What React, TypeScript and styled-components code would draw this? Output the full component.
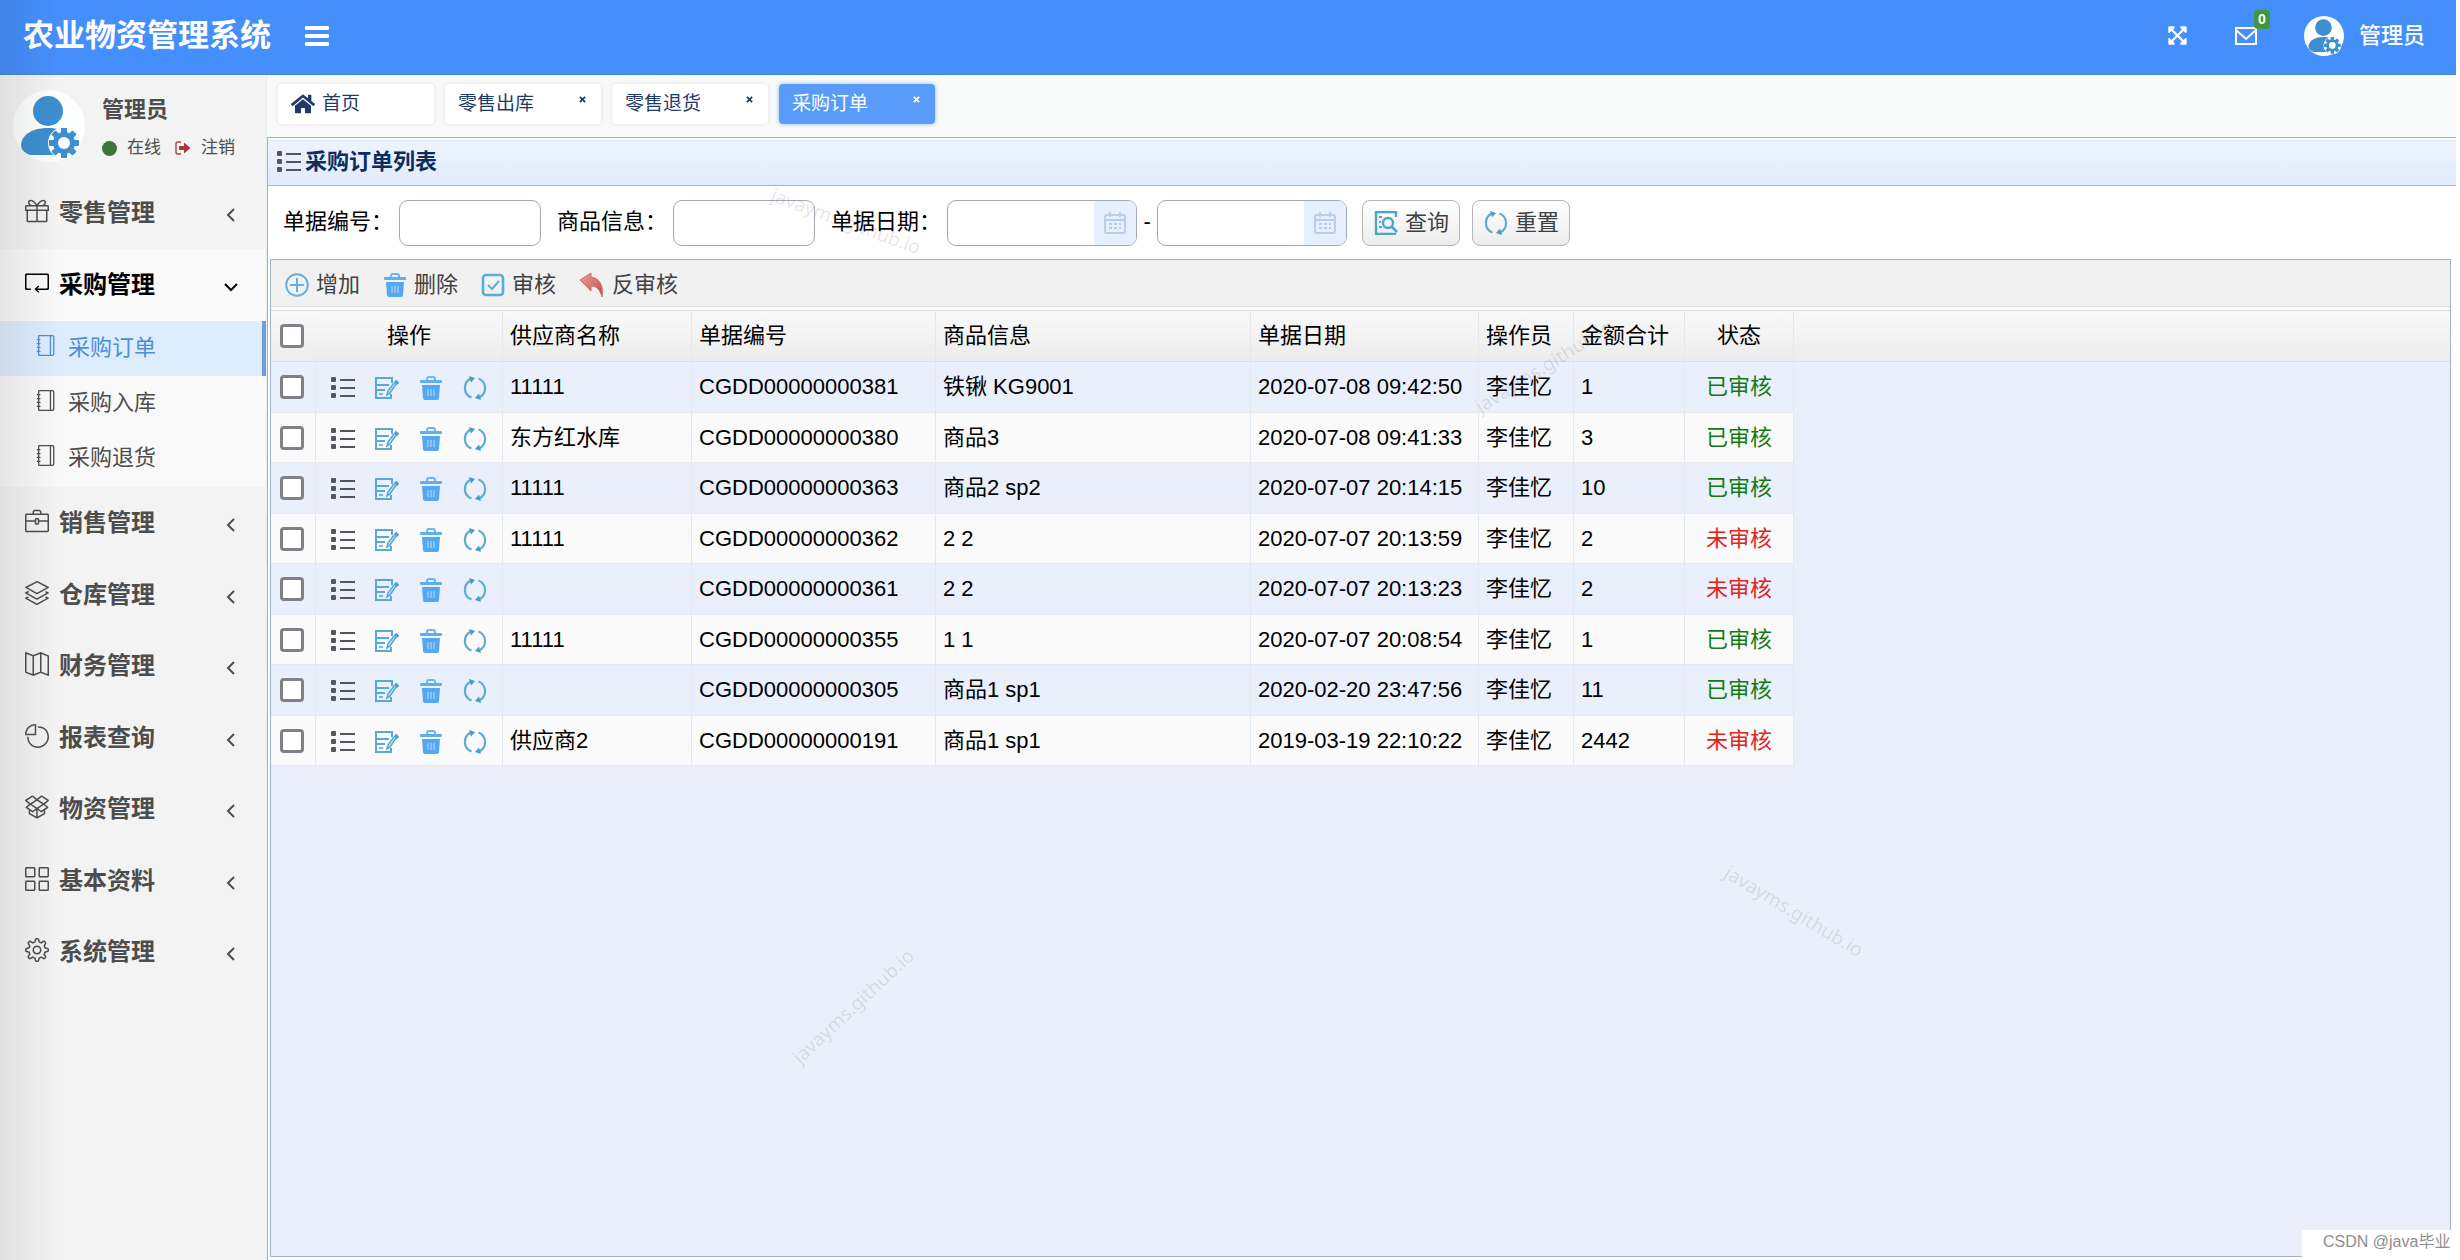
import React, { useState } from "react";
import styled, { createGlobalStyle, css } from "styled-components";
import {
  SlPresent,
  SlLoop,
  SlBriefcase,
  SlLayers,
  SlMap,
  SlPieChart,
  SlSocialDropbox,
  SlGrid,
  SlSettings,
  SlNotebook,
} from "react-icons/sl";
import { FaHome, FaExpandArrowsAlt } from "react-icons/fa";

const Global = createGlobalStyle`
  *, *::before, *::after { box-sizing: border-box; }
  body {
    margin: 0;
    background: #fefefe;
    color: #000;
    font-family: "Liberation Sans", "Noto Sans CJK SC", sans-serif;
    font-size: 22px;
    line-height: 30px;
  }
  button, input { font: inherit; color: inherit; margin: 0; }
  button { border: 0; padding: 0; background: none; cursor: pointer; }
  a { color: inherit; text-decoration: none; }
  svg { display: block; flex: none; }
`;

/* ---------- icons ---------- */

const ListIcon = () => (
  <svg width="24" height="24" viewBox="0 0 24 24" fill="#55555f">
    <rect x="0" y="1" width="5" height="5" rx="1" />
    <rect x="0" y="9" width="5" height="5" rx="1" />
    <rect x="0" y="17" width="5" height="5" rx="1" />
    <rect x="9" y="3" width="15" height="2" />
    <rect x="9" y="11" width="15" height="2" />
    <rect x="9" y="19" width="15" height="2" />
  </svg>
);

const EditIcon = () => (
  <svg width="24" height="24" viewBox="0 0 24 24" fill="none" stroke="#58aad6" strokeWidth="2">
    <path d="M17 7V2H1v20h15v-4" />
    <path d="M1 9h13M1 14h9" />
    <path d="M4 18h4" strokeWidth="1.600" />
    <path d="M21 8l-6 9-3 2 1-4 6-8" fill="#d5ebf8" strokeWidth="1.600" />
    <path d="M20 5l3 3" strokeWidth="3.400" stroke="#4a9fd0" />
  </svg>
);

const TrashIcon = () => (
  <svg width="24" height="24" viewBox="0 0 24 24">
    <path d="M8 4V3a2 2 0 0 1 2-2h4a2 2 0 0 1 2 2v1" fill="none" stroke="#69b7f0" strokeWidth="2" />
    <rect x="1" y="4" width="22" height="3" rx="1" fill="#5cb0ee" />
    <path d="M3 9h18l-1 13a2 2 0 0 1-2 2H6a2 2 0 0 1-2-2z" fill="#54a8f2" />
    <path d="M9 13v7M12 13v7M15 13v7" stroke="#9bcffb" strokeWidth="1.400" />
  </svg>
);

const RefreshIcon = () => (
  <svg width="24" height="24" viewBox="0 0 24 24" fill="none" stroke="#5eaccf" strokeWidth="2.200">
    <path d="M8.500 21.500A10.300 10.300 0 0 1 8 2.500" />
    <path d="M15.500 2.500A10.300 10.300 0 0 1 16 21.500" />
    <path d="M6 0l6 2-4 4.500z" fill="#4a9ac6" stroke="none" />
    <path d="M18 24l-6-2 4-4.500z" fill="#4a9ac6" stroke="none" />
  </svg>
);

const AddIcon = () => (
  <svg width="24" height="24" viewBox="0 0 24 24" fill="none" stroke="#64b1da" strokeWidth="2">
    <circle cx="12" cy="12" r="10.800" />
    <path d="M12 5v14M5 12h14" />
  </svg>
);

const AuditIcon = () => (
  <svg width="24" height="24" viewBox="0 0 24 24" fill="none" stroke="#55aede" strokeWidth="2.600">
    <rect x="2" y="2" width="20" height="20" rx="3" />
    <path d="M7 12l4 4 7-8" strokeWidth="2" />
  </svg>
);

const UndoIcon = () => (
  <svg width="26" height="26" viewBox="0 0 26 26">
    <defs>
      <linearGradient id="undo" x1="0" y1="0" x2="1" y2="1">
        <stop offset="0" stopColor="#efa39c" />
        <stop offset="1" stopColor="#c3474a" />
      </linearGradient>
    </defs>
    <path d="M1 8L12 1v4c8 1 13 8 11 20-2-7-5-11-11-11v5z" fill="url(#undo)" stroke="#c9706b" strokeWidth="1" />
  </svg>
);

const SearchDocIcon = () => (
  <svg width="24" height="24" viewBox="0 0 24 24" fill="none" stroke="#4fa3cf" strokeWidth="2.400">
    <path d="M22 6V1H2v22h20" />
    <circle cx="14" cy="12" r="5" />
    <path d="M18 16l5 5" strokeWidth="2.600" />
    <path d="M5 6h3M5 11h2M5 16h3" strokeWidth="2" />
  </svg>
);

const CalendarIcon = () => (
  <svg width="24" height="24" viewBox="0 0 24 24" fill="none" stroke="#b9cee4" strokeWidth="2">
    <rect x="2" y="4" width="20" height="18" rx="2" />
    <path d="M2 9h20M7 1v5M17 1v5" />
    <path d="M6 13h12M6 17h12" strokeDasharray="3 2" />
  </svg>
);

const CloseIcon = () => (
  <svg width="7" height="7" viewBox="0 0 8 8" stroke="currentColor" strokeWidth="2">
    <path d="M1 1l6 6M7 1L1 7" />
  </svg>
);

const BarsIcon = () => (
  <svg width="24" height="22" viewBox="0 0 24 22" fill="#fff">
    <rect y="1" width="24" height="4" rx="1" />
    <rect y="9" width="24" height="4" rx="1" />
    <rect y="17" width="24" height="4" rx="1" />
  </svg>
);

const MailIcon = () => (
  <svg width="22" height="20" viewBox="0 0 22 20" fill="none" stroke="#fff" strokeWidth="2">
    <rect x="1" y="2" width="20" height="16" />
    <path d="M1 4l10 9 10-9" />
  </svg>
);

const SignOutIcon = () => (
  <svg width="16" height="14" viewBox="0 0 16 14">
    <path d="M6 1H3a2 2 0 0 0-2 2v8a2 2 0 0 0 2 2h3" fill="none" stroke="#a94442" strokeWidth="1.400" />
    <path d="M4 5h5V1.500L15.500 7 9 12.500V9H4z" fill="#a23c3f" />
  </svg>
);

const Chevron = ({ open }: { open: boolean }) => (
  <svg width="14" height="14" viewBox="0 0 14 14" fill="none" stroke="currentColor" strokeWidth="2">
    <path d={open ? "M1 4l6 6 6-6" : "M10 1L4 7l6 6"} />
  </svg>
);

const teeth = [0, 45, 90, 135, 180, 225, 270, 315];

const Avatar = ({ size }: { size: number }) => (
  <svg width={size} height={size} viewBox="0 0 72 72" role="img" aria-label="管理员头像">
    <circle cx="36" cy="36" r="36" fill="#fdfefe" />
    <circle cx="35" cy="21" r="15" fill="#3d8fd0" />
    <path d="M8 55C9 44 20 38 35 38c9 0 16 2 20 8v19H17C12 63 8 60 8 55z" fill="#3d8fd0" />
    <circle cx="51" cy="53" r="16" fill="#fdfefe" />
    <g fill="#3d8fd0">
      {teeth.map((a) => (
        <rect key={a} x="48" y="38" width="6" height="8" rx="1" transform={`rotate(${a} 51 53)`} />
      ))}
      <circle cx="51" cy="53" r="11" />
    </g>
    <circle cx="51" cy="53" r="6" fill="#fdfefe" />
  </svg>
);

/* ---------- page frame ---------- */

const Page = styled.div`
  position: relative;
  display: flex;
  flex-direction: column;
  min-height: 100vh;
  padding-right: 4px;
  overflow: hidden;
`;

const TopBar = styled.header`
  display: flex;
  align-items: center;
  height: 75px;
  padding: 0 31px 3px 23px;
  background: #458ffc;
  border-bottom: 1px solid #4a86c8;
  color: #fff;
`;

const Brand = styled.h1`
  margin: 0 34px 0 0;
  font-size: 31px;
  line-height: 40px;
  font-weight: 700;
`;

const TopActions = styled.div`
  display: flex;
  align-items: center;
  gap: 47px;
  margin-left: auto;
`;

const IconButton = styled.button`
  position: relative;
  display: flex;
`;

const Badge = styled.span`
  position: absolute;
  right: -13px;
  top: -16px;
  width: 16px;
  border-radius: 4px;
  background: #419641;
  font-size: 14px;
  line-height: 19px;
  font-weight: 700;
  text-align: center;
`;

const Account = styled.button`
  display: flex;
  align-items: center;
  gap: 15px;
  font-weight: 500;
`;

const Body = styled.div`
  display: flex;
  flex: 1;
`;

const Sidebar = styled.aside`
  flex: none;
  width: 267px;
  background: #f3f3f3;
  border-right: 1px solid #e9eef2;
  color: #4d4d4d;
`;

const UserPanel = styled.section`
  display: flex;
  gap: 17px;
  height: 102px;
  padding: 15px 0 0 13px;
`;

const UserInfo = styled.div`
  display: flex;
  flex-direction: column;
  gap: 11px;
  padding-top: 5px;
`;

const UserName = styled.strong`
  font-weight: 700;
`;

const UserLinks = styled.div`
  display: flex;
  align-items: center;
  gap: 14px;
  font-size: 17px;
  line-height: 24px;
`;

const UserLink = styled.a`
  display: flex;
  align-items: center;
  gap: 10px;
`;

const OnlineDot = styled.i`
  width: 15px;
  height: 15px;
  border-radius: 50%;
  background: #3c763d;
`;

const MenuList = styled.ul`
  margin: 0;
  padding: 0;
  list-style: none;
`;

const MenuItem = styled.li<{ $open: boolean }>`
  ${(p) => p.$open && css`
    background: #f9f9f9;
    color: #000;
  `}
`;

const MenuButton = styled.button<{ $short: boolean }>`
  display: flex;
  align-items: center;
  width: 100%;
  height: ${(p) => (p.$short ? 71 : 72)}px;
  padding: 0 28px 0 25px;
  gap: 10px;
  font-size: 24px;
  font-weight: 700;
  text-align: left;

  & > span { flex: 1; }
  & > svg:first-child { margin-bottom: 4px; }
  & > svg:last-child { margin-top: 4px; }
`;

const SubList = styled(MenuList)`
  padding-bottom: 1px;
  color: #4d4d4d;
`;

const SubLink = styled.a<{ $active: boolean }>`
  display: flex;
  align-items: center;
  gap: 12px;
  height: 55px;
  padding: 0 0 2px 35px;
  border-right: 4px solid ${(p) => (p.$active ? "#6aa0dc" : "transparent")};
  background: ${(p) => (p.$active ? "#deedfe" : "transparent")};
  color: ${(p) => (p.$active ? "#4a8fd6" : "inherit")};

  & > svg { margin-bottom: 4px; }
`;

const Main = styled.main`
  display: flex;
  flex: 1;
  flex-direction: column;
  min-width: 0;
`;

/* ---------- page tabs ---------- */

const TabBar = styled.nav`
  display: flex;
  gap: 11px;
  height: 62px;
  padding: 9px 11px 13px;
  background: #f8f9f9;
`;

const Tab = styled.div<{ $active?: boolean }>`
  display: flex;
  justify-content: space-between;
  width: 156px;
  padding: 0 15px 0 13px;
  border-radius: 4px;
  background: ${(p) => (p.$active ? "#589bf8" : "#fff")};
  box-shadow: 0 0 4px ${(p) => (p.$active ? "#8db9f5" : "#e2e2e2")};
  color: ${(p) => (p.$active ? "#fff" : "#1f3a68")};
`;

const TabLabel = styled.button`
  display: flex;
  align-items: center;
  gap: 7px;
  font-size: 19px;
  line-height: 30px;
`;

const TabClose = styled.button`
  align-self: flex-start;
  padding-top: 12px;
`;

/* ---------- order panel ---------- */

const Panel = styled.section`
  display: flex;
  flex: 1;
  flex-direction: column;
  padding-top: 2px;
  border-top: 1px solid #9db4c8;
  border-left: 1px solid #9db4d0;
  background: #fff;
`;

const PanelTitle = styled.h2`
  display: flex;
  align-items: center;
  gap: 4px;
  height: 46px;
  margin: 0;
  padding: 0 9px 3px;
  border-top: 1px solid #dbe9f2;
  border-bottom: 1px solid #a6b6d2;
  background: linear-gradient(#eef4fe, #e0ebfb);
  color: #0e2d5f;
  font-size: 22px;
  font-weight: 700;
`;

const SearchForm = styled.form`
  display: flex;
  align-items: center;
  padding: 14px 15px 13px;
`;

const SearchLabel = styled.label`
  margin-right: 6px;
  padding-bottom: 2px;
`;

const fieldBox = css`
  height: 46px;
  border: 1px solid #a5a8b5;
  border-radius: 9px;
  background: #fff;
`;

const TextField = styled.input`
  ${fieldBox}
  width: 142px;
  margin-right: 16px;
  padding: 0 8px;
`;

const DateField = styled.span`
  ${fieldBox}
  display: flex;
  width: 190px;
  overflow: hidden;
`;

const DateInput = styled.input`
  flex: 1;
  min-width: 0;
  padding: 0 8px;
  border: 0;
  background: none;
`;

const DateButton = styled.button`
  display: flex;
  align-items: center;
  justify-content: center;
  width: 42px;
  background: #e6f0fc;
`;

const Dash = styled.span`
  width: 20px;
  padding-bottom: 2px;
  text-align: center;
`;

const FormButton = styled.button`
  display: flex;
  align-items: center;
  gap: 7px;
  height: 46px;
  margin-left: 12px;
  padding: 0 10px 0 11px;
  border: 1px solid #b5b5b5;
  border-radius: 8px;
  background: linear-gradient(#fff, #ececec);
  color: #404040;

  &:first-of-type { margin-left: 15px; }
`;

const DataGrid = styled.div`
  display: flex;
  flex: 1;
  flex-direction: column;
  margin: 0 5px 3px 2px;
  border: 1px solid #a3b1c6;
  background: #eaeffb;
`;

const Toolbar = styled.div`
  display: flex;
  align-items: center;
  gap: 23px;
  height: 47px;
  padding: 4px 14px 0;
  border-bottom: 1px solid #dedede;
  background: #f1f1f1;
`;

const ToolButton = styled.button`
  display: flex;
  align-items: center;
  gap: 7px;
  color: #404040;
`;

const TableWrap = styled.div`
  padding-top: 3px;
  background: linear-gradient(#fafafa, #fafafa) top / 100% 3px no-repeat;
`;

const Table = styled.table`
  width: 100%;
  border-collapse: separate;
  border-spacing: 0;
  table-layout: fixed;
  border-top: 1px solid #dcdcdc;
`;

type Align = { $center?: boolean };

const HeadCell = styled.th<Align>`
  height: 51px;
  padding: 0 0 0 ${(p) => (p.$center ? 0 : 7)}px;
  border-right: 1px solid #e7e7e7;
  border-bottom: 1px solid #dcdee0;
  background: linear-gradient(#f9f9f9, #ececec);
  font-weight: 400;
  text-align: ${(p) => (p.$center ? "center" : "left")};

  &:first-child, &:last-child { border-right-color: transparent; }
`;

const Cell = styled.td<Align>`
  padding: 0 0 0 ${(p) => (p.$center ? 0 : 7)}px;
  border-right: 1px solid #e4e8f1;
  border-bottom: 1px solid #e6e9f0;
  text-align: ${(p) => (p.$center ? "center" : "left")};
  white-space: nowrap;
`;

const Filler = styled.td`
  background: #eaeffb;
`;

const Row = styled.tr`
  height: 51px;
  background: #e9effb;

  &:nth-child(even) {
    height: 50px;
    background: #fafafa;
  }
`;

const Check = styled.input`
  display: block;
  width: 24px;
  height: 24px;
  margin: 0 0 0 2px;
  appearance: none;
  border: 3px solid #808086;
  border-radius: 4px;
  background: #fff;

  &:checked { background: #458ffc; }
`;

const RowActions = styled.div`
  display: flex;
  gap: 20px;
  padding: 2px 0 0 8px;
`;

const Status = styled.span<{ $done: boolean }>`
  color: ${(p) => (p.$done ? "#127a12" : "#e02420")};
`;

/* ---------- overlays ---------- */

const EdgeShade = styled.div`
  position: absolute;
  inset: 0 auto 0 0;
  width: 60px;
  background: linear-gradient(90deg, rgba(0, 0, 0, 0.08), rgba(0, 0, 0, 0));
  pointer-events: none;
`;

const Watermark = styled.span<{ $x: number; $y: number; $angle: number }>`
  position: absolute;
  left: ${(p) => p.$x}px;
  top: ${(p) => p.$y}px;
  transform: translate(-50%, -50%) rotate(${(p) => p.$angle}deg);
  color: rgba(60, 60, 70, 0.13);
  font-family: "Noto Sans", sans-serif;
  font-size: 19px;
  pointer-events: none;
`;

const Credit = styled.div`
  position: absolute;
  right: 0;
  bottom: 0;
  width: 158px;
  height: 30px;
  padding-left: 21px;
  background: #fff;
  color: #8e8e8e;
  font-size: 16px;
  line-height: 24px;
`;

/* ---------- data ---------- */

const menu = [
  { name: "零售管理", icon: SlPresent },
  { name: "采购管理", icon: SlLoop, children: ["采购订单", "采购入库", "采购退货"] },
  { name: "销售管理", icon: SlBriefcase },
  { name: "仓库管理", icon: SlLayers },
  { name: "财务管理", icon: SlMap },
  { name: "报表查询", icon: SlPieChart },
  { name: "物资管理", icon: SlSocialDropbox },
  { name: "基本资料", icon: SlGrid },
  { name: "系统管理", icon: SlSettings },
];

const tabs = ["零售出库", "零售退货", "采购订单"];

const columns = [
  { title: "操作", width: 187, center: true },
  { title: "供应商名称", width: 189 },
  { title: "单据编号", width: 244 },
  { title: "商品信息", width: 315 },
  { title: "单据日期", width: 228 },
  { title: "操作员", width: 95 },
  { title: "金额合计", width: 111 },
  { title: "状态", width: 109, center: true },
];

const orders = [
  ["11111", "CGDD00000000381", "铁锹 KG9001", "2020-07-08 09:42:50", "李佳忆", "1", "已审核"],
  ["东方红水库", "CGDD00000000380", "商品3", "2020-07-08 09:41:33", "李佳忆", "3", "已审核"],
  ["11111", "CGDD00000000363", "商品2 sp2", "2020-07-07 20:14:15", "李佳忆", "10", "已审核"],
  ["11111", "CGDD00000000362", "2 2", "2020-07-07 20:13:59", "李佳忆", "2", "未审核"],
  ["", "CGDD00000000361", "2 2", "2020-07-07 20:13:23", "李佳忆", "2", "未审核"],
  ["11111", "CGDD00000000355", "1 1", "2020-07-07 20:08:54", "李佳忆", "1", "已审核"],
  ["", "CGDD00000000305", "商品1 sp1", "2020-02-20 23:47:56", "李佳忆", "11", "已审核"],
  ["供应商2", "CGDD00000000191", "商品1 sp1", "2019-03-19 22:10:22", "李佳忆", "2442", "未审核"],
];

const tools = [
  { name: "增加", icon: AddIcon },
  { name: "删除", icon: TrashIcon },
  { name: "审核", icon: AuditIcon },
  { name: "反审核", icon: UndoIcon },
];

const rowTools = [
  { name: "查看", icon: ListIcon },
  { name: "编辑", icon: EditIcon },
  { name: "删除", icon: TrashIcon },
  { name: "刷新", icon: RefreshIcon },
];

function DatePicker({ id, label }: { id: string; label: string }) {
  return (
    <DateField>
      <DateInput id={id} aria-label={label} />
      <DateButton type="button" aria-label="选择日期">
        <CalendarIcon />
      </DateButton>
    </DateField>
  );
}

function SideMenu() {
  const [open, setOpen] = useState("采购管理");
  return (
    <nav>
      <MenuList>
        {menu.map(({ name, icon: Icon, children }, i) => {
          const isOpen = open === name;
          return (
            <MenuItem key={name} $open={isOpen}>
              <MenuButton
                type="button"
                $short={i > 1 && i % 2 === 1}
                aria-expanded={isOpen}
                onClick={() => setOpen(isOpen ? "" : name)}
              >
                <Icon size={24} />
                <span>{name}</span>
                <Chevron open={isOpen} />
              </MenuButton>
              {isOpen && children && (
                <SubList>
                  {children.map((child, k) => (
                    <li key={child}>
                      <SubLink href="#" $active={k === 0}>
                        <SlNotebook size={21} />
                        {child}
                      </SubLink>
                    </li>
                  ))}
                </SubList>
              )}
            </MenuItem>
          );
        })}
      </MenuList>
    </nav>
  );
}

export default function App() {
  return (
    <Page>
      <Global />
      <TopBar>
        <Brand>农业物资管理系统</Brand>
        <IconButton type="button" aria-label="折叠菜单">
          <BarsIcon />
        </IconButton>
        <TopActions>
          <IconButton type="button" aria-label="全屏">
            <FaExpandArrowsAlt size={21} />
          </IconButton>
          <IconButton type="button" aria-label="消息">
            <MailIcon />
            <Badge>0</Badge>
          </IconButton>
          <Account type="button">
            <Avatar size={40} />
            管理员
          </Account>
        </TopActions>
      </TopBar>
      <Body>
        <Sidebar>
          <UserPanel>
            <Avatar size={72} />
            <UserInfo>
              <UserName>管理员</UserName>
              <UserLinks>
                <UserLink href="#">
                  <OnlineDot />
                  在线
                </UserLink>
                <UserLink href="#">
                  <SignOutIcon />
                  注销
                </UserLink>
              </UserLinks>
            </UserInfo>
          </UserPanel>
          <SideMenu />
        </Sidebar>
        <Main>
          <TabBar>
            <Tab>
              <TabLabel type="button">
                <FaHome size={24} />
                首页
              </TabLabel>
            </Tab>
            {tabs.map((tab) => (
              <Tab key={tab} $active={tab === "采购订单"}>
                <TabLabel type="button">{tab}</TabLabel>
                <TabClose type="button" aria-label={`关闭${tab}`}>
                  <CloseIcon />
                </TabClose>
              </Tab>
            ))}
          </TabBar>
          <Panel>
            <PanelTitle>
              <ListIcon />
              采购订单列表
            </PanelTitle>
            <SearchForm onSubmit={(e) => e.preventDefault()}>
              <SearchLabel htmlFor="number">单据编号：</SearchLabel>
              <TextField id="number" />
              <SearchLabel htmlFor="goods">商品信息：</SearchLabel>
              <TextField id="goods" />
              <SearchLabel htmlFor="begin">单据日期：</SearchLabel>
              <DatePicker id="begin" label="开始日期" />
              <Dash>-</Dash>
              <DatePicker id="end" label="结束日期" />
              <FormButton type="submit">
                <SearchDocIcon />
                查询
              </FormButton>
              <FormButton type="reset">
                <RefreshIcon />
                重置
              </FormButton>
            </SearchForm>
            <DataGrid>
              <Toolbar>
                {tools.map(({ name, icon: Icon }) => (
                  <ToolButton key={name} type="button">
                    <Icon />
                    {name}
                  </ToolButton>
                ))}
              </Toolbar>
              <TableWrap>
                <Table>
                  <colgroup>
                    <col width="45" />
                    {columns.map((c) => (
                      <col key={c.title} width={c.width} />
                    ))}
                    <col />
                  </colgroup>
                  <thead>
                    <tr>
                      <HeadCell>
                        <Check type="checkbox" aria-label="全选" />
                      </HeadCell>
                      {columns.map((c) => (
                        <HeadCell key={c.title} $center={c.center}>
                          {c.title}
                        </HeadCell>
                      ))}
                      <HeadCell />
                    </tr>
                  </thead>
                  <tbody>
                    {orders.map((order) => (
                      <Row key={order[1]}>
                        <Cell>
                          <Check type="checkbox" aria-label={`选择${order[1]}`} />
                        </Cell>
                        <Cell>
                          <RowActions>
                            {rowTools.map(({ name, icon: Icon }) => (
                              <IconButton key={name} type="button" aria-label={name}>
                                <Icon />
                              </IconButton>
                            ))}
                          </RowActions>
                        </Cell>
                        {order.slice(0, 6).map((value, i) => (
                          <Cell key={i}>{value}</Cell>
                        ))}
                        <Cell $center>
                          <Status $done={order[6] === "已审核"}>{order[6]}</Status>
                        </Cell>
                        <Filler />
                      </Row>
                    ))}
                  </tbody>
                </Table>
              </TableWrap>
            </DataGrid>
          </Panel>
        </Main>
      </Body>
      <EdgeShade />
      <Watermark $x={846} $y={221} $angle={20}>javayms.github.io</Watermark>
      <Watermark $x={1544} $y={366} $angle={-32}>javayms.github.io</Watermark>
      <Watermark $x={853} $y={1006} $angle={-43}>javayms.github.io</Watermark>
      <Watermark $x={1794} $y={911} $angle={31}>javayms.github.io</Watermark>
      <Credit>CSDN @java毕业</Credit>
    </Page>
  );
}
